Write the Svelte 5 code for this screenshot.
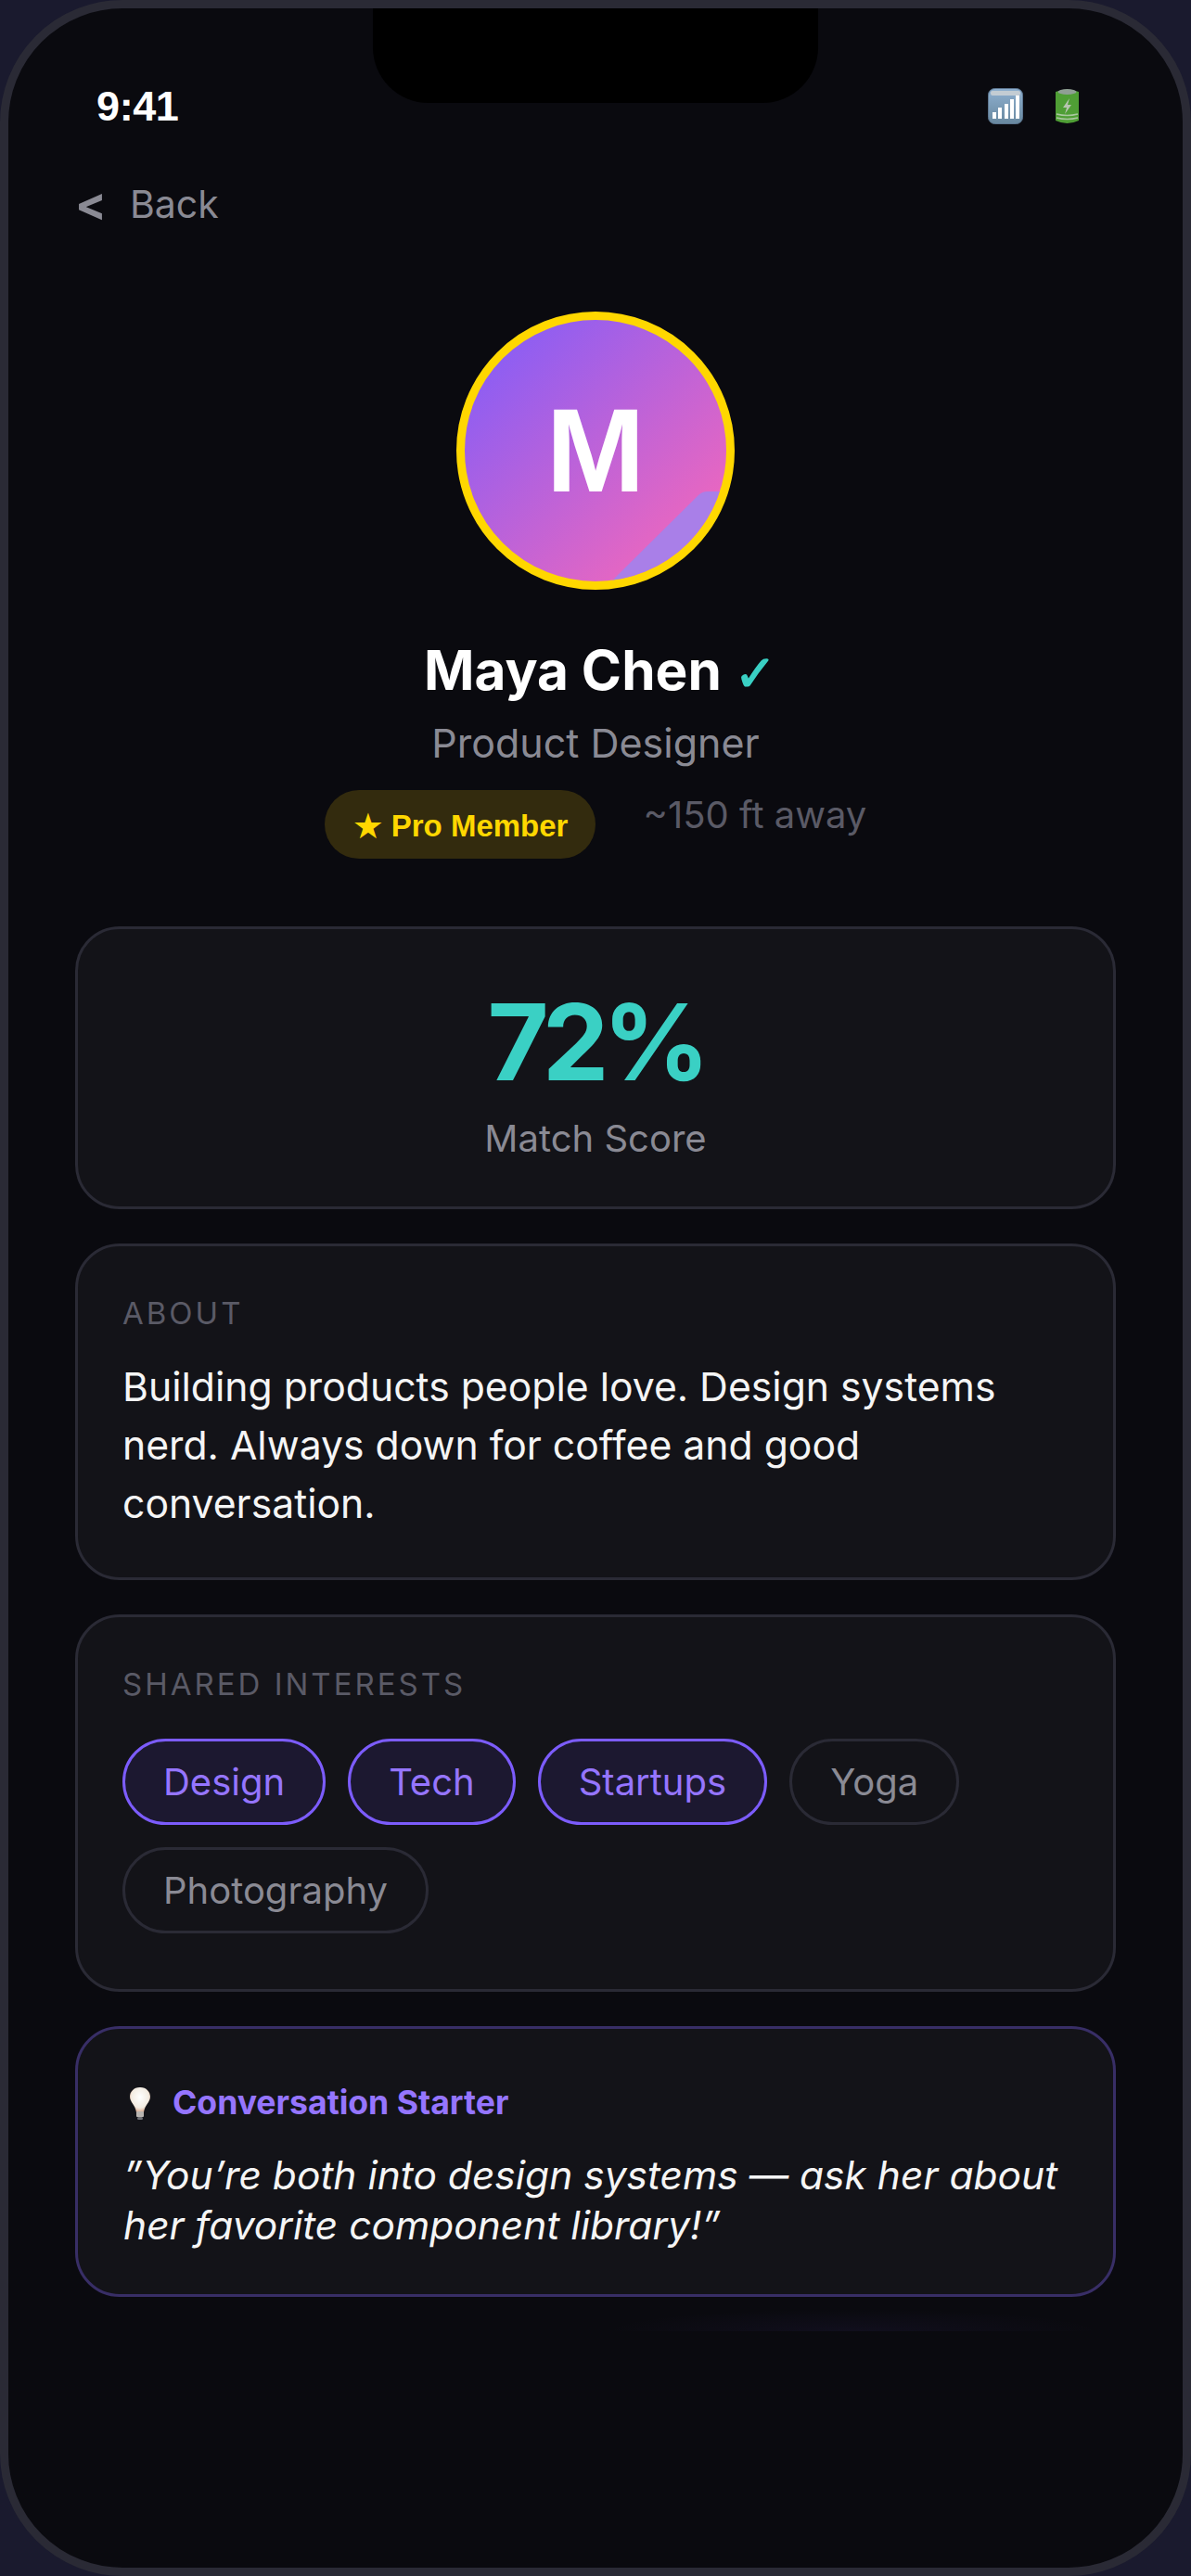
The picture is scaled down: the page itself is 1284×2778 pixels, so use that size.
<script lang="ts">
  const interests = [
    { label: 'Design', shared: true },
    { label: 'Tech', shared: true },
    { label: 'Startups', shared: true },
    { label: 'Yoga', shared: false },
    { label: 'Photography', shared: false }
  ];
</script>

<div class="device">
  <div class="screen">
    <div class="notch" aria-hidden="true"></div>
    <div class="glow" aria-hidden="true"></div>

    <div class="status">
      <span class="time">9:41</span>
      <div class="status-icons">
        <svg width="38" height="39" viewBox="0 0 38 39" aria-label="signal">
          <defs>
            <linearGradient id="sig" x1="0" y1="0" x2="0" y2="1">
              <stop offset="0" stop-color="#8fb0d0" />
              <stop offset="1" stop-color="#68889f" />
            </linearGradient>
          </defs>
          <rect x="0.5" y="0.5" width="37" height="38" rx="7" fill="url(#sig)" stroke="#5d7690" />
          <rect x="3" y="3" width="32" height="5" rx="2" fill="#c3ccd3" />
          <rect x="5" y="26" width="4" height="7" fill="#fff" />
          <rect x="11" y="21" width="4" height="12" fill="#fff" />
          <rect x="18" y="17" width="4" height="16" fill="#fff" />
          <rect x="24" y="12" width="4" height="21" fill="#fff" />
          <rect x="30" y="8" width="4" height="25" fill="#fff" />
        </svg>
        <svg width="27" height="39" viewBox="0 0 27 39" aria-label="battery">
          <path d="M1 4 Q13.5 -1 26 4 V35 Q13.5 41 1 35 Z" fill="#4f9e35" />
          <ellipse cx="13.5" cy="4" rx="10" ry="3" fill="#8f9f94" />
          <path d="M16 11 L9 21 H13 L11 28 L18 18 H14 Z" fill="#b7c4b0" />
          <path d="M2 28 Q13.5 31 25 28 M2 32 Q13.5 35 25 32" stroke="#a9c79f" stroke-width="1.5" fill="none" />
        </svg>
      </div>
    </div>

    <div class="back">
      <span class="chev">&lt;</span>
      <span>Back</span>
    </div>

    <section class="profile">
      <div class="avatar">
        <span class="initial">M</span>
        <svg class="fold" viewBox="0 0 282 282" aria-hidden="true">
          <path d="M153 287 L252 189 Q256 185 262 185 L290 185 L290 290 Z" fill="#a97fe8" />
        </svg>
      </div>
      <div class="name-row">
        <h1>Maya Chen</h1>
        <span class="check">✓</span>
      </div>
      <p class="role">Product Designer</p>
      <div class="meta-row">
        <span class="pro"><span class="star">★</span> Pro Member</span>
        <span class="distance">~150 ft away</span>
      </div>
    </section>

    <div class="cards">
      <div class="card score">
        <div class="pct">72%</div>
        <div class="score-label">Match Score</div>
      </div>

      <div class="card">
        <div class="label">ABOUT</div>
        <p class="bio">Building products people love. Design systems nerd. Always down for coffee and good conversation.</p>
      </div>

      <div class="card">
        <div class="label">SHARED INTERESTS</div>
        <div class="chips">
          {#each interests as item}
            <span class="chip" class:shared={item.shared}>{item.label}</span>
          {/each}
        </div>
      </div>

      <div class="card starter">
        <div class="starter-head">
          <svg width="24" height="36" viewBox="0 0 24 36" aria-hidden="true">
            <defs>
              <radialGradient id="bulb" cx="0.5" cy="0.4" r="0.6">
                <stop offset="0" stop-color="#ffffff" />
                <stop offset="0.7" stop-color="#f3ece2" />
                <stop offset="1" stop-color="#d9a78c" />
              </radialGradient>
            </defs>
            <path d="M12 1 C5 1 1 6 1 11 C1 17 7 20 8 28 H16 C17 20 23 17 23 11 C23 6 19 1 12 1 Z" fill="url(#bulb)" />
            <rect x="8" y="27" width="8" height="6" rx="1" fill="#b9b4b0" />
            <rect x="9" y="33" width="6" height="3" rx="1.5" fill="#6f6f74" />
          </svg>
          <span class="starter-title">Conversation Starter</span>
        </div>
        <p class="quote">”You’re both into design systems — ask her about her favorite component library!”</p>
      </div>
    </div>
  </div>
</div>

<style>
  :global(body) {
    margin: 0;
    background: #1a1a2e;
  }

  .device {
    width: 1284px;
    height: 2778px;
    background: #1a1a2e;
    font-family: Inter, "Noto Sans", sans-serif;
  }

  .screen {
    position: relative;
    box-sizing: border-box;
    width: 100%;
    height: 100%;
    border: 9px solid #2a2a35;
    border-radius: 132px;
    background: #0a0a0f;
    overflow: hidden;
    color: #fff;
  }

  .notch {
    position: absolute;
    top: 0;
    left: 393px;
    width: 480px;
    height: 102px;
    background: #000;
    border-radius: 0 0 60px 60px;
  }

  /* faint purple shadow cut off under the last card */
  .glow {
    position: absolute;
    left: 644px;
    top: 2481px;
    width: 533px;
    height: 24px;
    background: radial-gradient(ellipse 50% 100% at 50% 100%, rgba(124, 92, 252, 0.06), transparent);
  }

  .status {
    display: flex;
    justify-content: space-between;
    align-items: center;
    height: 40px;
    padding: 86px 111px 0 95px;
  }

  .time {
    font-family: "Liberation Sans", sans-serif;
    font-weight: 700;
    font-size: 45px;
    letter-spacing: -0.4px;
  }

  .status-icons {
    display: flex;
    align-items: center;
    gap: 34px;
    margin-top: -2px;
  }

  .back {
    display: flex;
    align-items: center;
    gap: 25px;
    height: 40px;
    margin: 65px 0 0 72px;
    font-size: 41px;
    color: #8a8a94;
  }

  .chev {
    font-weight: 700;
    font-size: 50px;
    line-height: 40px;
  }

  .profile {
    display: flex;
    flex-direction: column;
    align-items: center;
    margin-top: 96px;
  }

  .avatar {
    position: relative;
    box-sizing: border-box;
    width: 300px;
    height: 300px;
    border: 9px solid #ffd700;
    border-radius: 50%;
    background: linear-gradient(135deg, #7c5cfc, #ff69b4);
    overflow: hidden;
    display: flex;
    align-items: center;
    justify-content: center;
  }

  .initial {
    font-family: "Liberation Sans", sans-serif;
    font-weight: 700;
    font-size: 128px;
    line-height: 1;
  }

  .fold {
    position: absolute;
    inset: 0;
    width: 100%;
    height: 100%;
  }

  .name-row {
    display: flex;
    align-items: center;
    gap: 14px;
    margin: 48px 0 0 10px;
  }

  h1 {
    margin: 0;
    font-size: 58.5px;
    line-height: 78px;
    font-weight: 700;
  }

  .check {
    padding-top: 7px;
    font-family: "DejaVu Sans", sans-serif;
    font-weight: 700;
    font-size: 54px;
    line-height: 71px;
    color: #3ad0c4;
    -webkit-text-stroke: 1.5px #3ad0c4;
  }

  .role {
    margin: 13px 0 0;
    font-size: 43px;
    line-height: 52px;
    color: #8a8a94;
  }

  .meta-row {
    display: flex;
    align-items: flex-start;
    gap: 51px;
    margin-top: 25px;
  }

  .pro {
    box-sizing: border-box;
    display: flex;
    align-items: center;
    gap: 8px;
    height: 74px;
    padding: 4px 30px 0;
    border-radius: 37px;
    background: #332b0e;
    color: #ffd700;
    font-family: "Liberation Sans", sans-serif;
    font-weight: 700;
    font-size: 33px;
  }

  .star {
    font-family: "DejaVu Sans", sans-serif;
    font-size: 38px;
  }

  .distance {
    font-size: 40px;
    line-height: 54px;
    color: #5a5a66;
  }

  .cards {
    display: flex;
    flex-direction: column;
    gap: 37px;
    margin: 73px 72px 0;
  }

  .card {
    box-sizing: border-box;
    padding: 51px 48px 48px;
    border: 3px solid #2a2a35;
    border-radius: 48px;
    background: #131318;
  }

  .score {
    height: 305px;
    text-align: center;
    padding-top: 65px;
  }

  .pct {
    font-size: 114px;
    line-height: 114px;
    font-weight: 700;
    letter-spacing: -7px;
    color: #3ad0c4;
  }

  .score-label {
    margin-top: 22px;
    font-size: 40px;
    line-height: 50px;
    color: #8a8a94;
  }

  .label {
    font-size: 33px;
    line-height: 42px;
    letter-spacing: 3px;
    color: #5a5a66;
  }

  .bio {
    margin: 27px 0 0;
    font-size: 42.7px;
    line-height: 63px;
    color: #f5f5f5;
  }

  .chips {
    display: flex;
    flex-wrap: wrap;
    gap: 24px;
    margin: 38px 0 12px;
  }

  .chip {
    box-sizing: border-box;
    height: 93px;
    display: flex;
    align-items: center;
    padding: 0 41px;
    border: 3px solid #2a2a35;
    border-radius: 48px;
    font-size: 40px;
    color: #8a8a94;
  }

  .chip.shared {
    border-color: #7c5cfc;
    background: #1c1830;
    color: #9575ff;
  }

  .starter {
    height: 292px;
    border-color: #382e66;
  }

  .starter-head {
    display: flex;
    align-items: center;
    gap: 23px;
    margin: 7px 0 0 7px;
  }

  .starter-title {
    font-size: 35.6px;
    font-weight: 700;
    color: #9575ff;
  }

  .quote {
    margin: 30px 0 0 1px;
    font-size: 42.5px;
    line-height: 54px;
    font-style: italic;
    color: #f5f5f5;
  }
</style>
